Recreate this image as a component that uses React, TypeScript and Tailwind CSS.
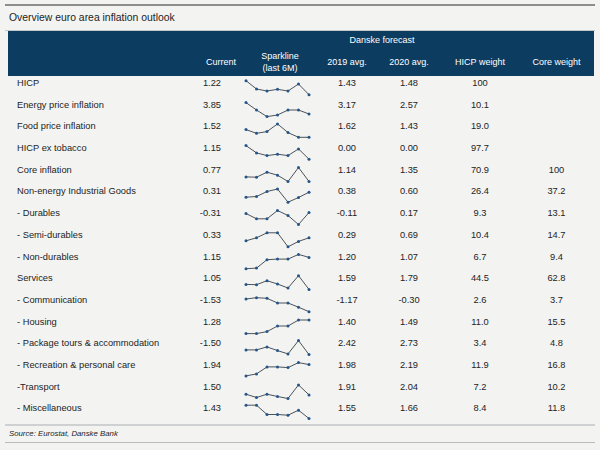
import React from "react";

interface Row {
  label: string;
  current: string;
  spark: number[];
  y2019: string;
  y2020: string;
  hicpWeight: string;
  coreWeight: string;
}

// y positions (px from row top) of the 7 sparkline points
const rows: Row[] = [
  { label: "HICP", current: "1.22", spark: [4.7, 13, 15, 13.3, 15, 8, 18.7], y2019: "1.43", y2020: "1.48", hicpWeight: "100", coreWeight: "" },
  { label: "Energy price inflation", current: "3.85", spark: [4.6, 12, 18.6, 17, 12, 12, 16], y2019: "3.17", y2020: "2.57", hicpWeight: "10.1", coreWeight: "" },
  { label: "Food price inflation", current: "1.52", spark: [10.6, 14.3, 12.6, 4.9, 13.6, 18.3, 18.3], y2019: "1.62", y2020: "1.43", hicpWeight: "19.0", coreWeight: "" },
  { label: "HICP ex tobacco", current: "1.15", spark: [4.6, 11.9, 14.6, 13.2, 14.6, 7.9, 18.2], y2019: "0.00", y2020: "0.00", hicpWeight: "97.7", coreWeight: "" },
  { label: "Core inflation", current: "0.77", spark: [13.9, 14.2, 9.2, 12.2, 18.5, 4.5, 18.5], y2019: "1.14", y2020: "1.35", hicpWeight: "70.9", coreWeight: "100" },
  { label: "Non-energy Industrial Goods", current: "0.31", spark: [13.2, 12.5, 7.5, 5, 18.2, 13.5, 8.2], y2019: "0.38", y2020: "0.60", hicpWeight: "26.4", coreWeight: "37.2" },
  { label: "- Durables", current: "-0.31", spark: [7.5, 12.8, 12.8, 4.5, 9.5, 18.5, 6.5], y2019: "-0.11", y2020: "0.17", hicpWeight: "9.3", coreWeight: "13.1" },
  { label: "- Semi-durables", current: "0.33", spark: [12.8, 9.8, 4.8, 4.8, 18.8, 13.4, 9.8], y2019: "0.29", y2020: "0.69", hicpWeight: "10.4", coreWeight: "14.7" },
  { label: "- Non-durables", current: "1.15", spark: [18.7, 18.1, 9.7, 9.1, 9.1, 4.4, 7.4], y2019: "1.20", y2020: "1.07", hicpWeight: "6.7", coreWeight: "9.4" },
  { label: "Services", current: "1.05", spark: [13.4, 13.7, 9.7, 13, 17, 4.7, 18.4], y2019: "1.59", y2020: "1.79", hicpWeight: "44.5", coreWeight: "62.8" },
  { label: "- Communication", current: "-1.53", spark: [6, 4.7, 5.3, 10, 10, 14.2, 18.7], y2019: "-1.17", y2020: "-0.30", hicpWeight: "2.6", coreWeight: "3.7" },
  { label: "- Housing", current: "1.28", spark: [18.6, 18.6, 16.6, 11, 11, 5, 5], y2019: "1.40", y2020: "1.49", hicpWeight: "11.0", coreWeight: "15.5" },
  { label: "- Package tours & accommodation", current: "-1.50", spark: [13.9, 13.9, 10.9, 14.6, 17.9, 4.6, 18.6], y2019: "2.42", y2020: "2.73", hicpWeight: "3.4", coreWeight: "4.8" },
  { label: "- Recreation & personal care", current: "1.94", spark: [17.9, 15.9, 8.9, 8.9, 9.6, 4.6, 6.6], y2019: "1.98", y2020: "2.19", hicpWeight: "11.9", coreWeight: "16.8" },
  { label: "-Transport", current: "1.50", spark: [14.2, 17.5, 14.2, 16.5, 18.5, 4.9, 14.9], y2019: "1.91", y2020: "2.04", hicpWeight: "7.2", coreWeight: "10.2" },
  { label: "- Miscellaneous", current: "1.43", spark: [4.2, 4.2, 13.5, 13.5, 14.2, 9.2, 17.5], y2019: "1.55", y2020: "1.66", hicpWeight: "8.4", coreWeight: "11.8" },
];

const cols = "grid grid-cols-[172px_56px_84px_54px_70px_72px_78px]";

const Sparkline: React.FC<{ ys: number[] }> = ({ ys }) => {
  const pts = ys.map((y, i) => [3 + i * 10.5, y]);
  return (
    <svg width="70" height="22" viewBox="0 0 70 22" className="ml-[7px]">
      <polyline
        points={pts.map((p) => p.join(",")).join(" ")}
        fill="none"
        stroke="#4c525a"
        strokeWidth="1"
      />
      {pts.map((p, i) => (
        <circle key={i} cx={p[0]} cy={p[1]} r="1.5" fill="#24548a" />
      ))}
    </svg>
  );
};

const App: React.FC = () => {
  return (
    <div
      className="w-[600px] h-[450px] bg-[#f3f4f2] text-[#232323] overflow-hidden"
      style={{ fontFamily: '"Liberation Sans", Arial, sans-serif' }}
    >
      {/* Top rule and title */}
      <div className="mx-[5px] mt-[4px] h-[2px] bg-[#8d8d8d]" />
      <div className="pl-[4px] mx-[5px] h-[24px] flex items-center text-[10.4px]">
        Overview euro area inflation outlook
      </div>
      <div className="mx-[5px] h-px bg-[#c4c6c8]" />

      {/* Table */}
      <div className="ml-[8px] w-[586px]">
        <div className="bg-[#0c3c60] text-white text-[9px] h-[45px] flex flex-col">
          <div className={`${cols} h-[19px] items-center`}>
            <div className="col-start-4 col-span-2 text-center pt-px">Danske forecast</div>
          </div>
          <div className={`${cols} flex-1 items-center`}>
            <div />
            <div className="text-right pr-0">Current</div>
            <div className="text-center leading-[12px] pl-[4px] -mt-[2px]">
              Sparkline
              <br />
              (last 6M)
            </div>
            <div className="text-center">2019 avg.</div>
            <div className="text-center">2020 avg.</div>
            <div className="text-center">HICP weight</div>
            <div className="text-center pl-[3px]">Core weight</div>
          </div>
        </div>

        <div className="text-[9.3px]">
          {rows.map((r) => (
            <div key={r.label} className={`${cols} h-[21.7px] items-start`}>
              <div className="pl-[9px] pt-px leading-[13px] whitespace-nowrap">{r.label}</div>
              <div className="text-right pr-[15px] pt-px leading-[13px]">{r.current}</div>
              <Sparkline ys={r.spark} />
              <div className="text-center pt-px leading-[13px]">{r.y2019}</div>
              <div className="text-center pt-px leading-[13px]">{r.y2020}</div>
              <div className="text-center pt-px leading-[13px]">{r.hicpWeight}</div>
              <div className="text-center pt-px leading-[13px] pl-[3px]">{r.coreWeight}</div>
            </div>
          ))}
        </div>
      </div>

      {/* Footer */}
      <div className="mx-[5px] mt-[1px] h-[2px] bg-[#cfd0d1]" />
      <div className="pl-[4px] mx-[5px] h-[16px] flex items-center text-[7.8px] italic">
        Source: Eurostat, Danske Bank
      </div>
      <div className="mx-[5px] h-px bg-[#b9bbbd]" />
    </div>
  );
};

export default App;
